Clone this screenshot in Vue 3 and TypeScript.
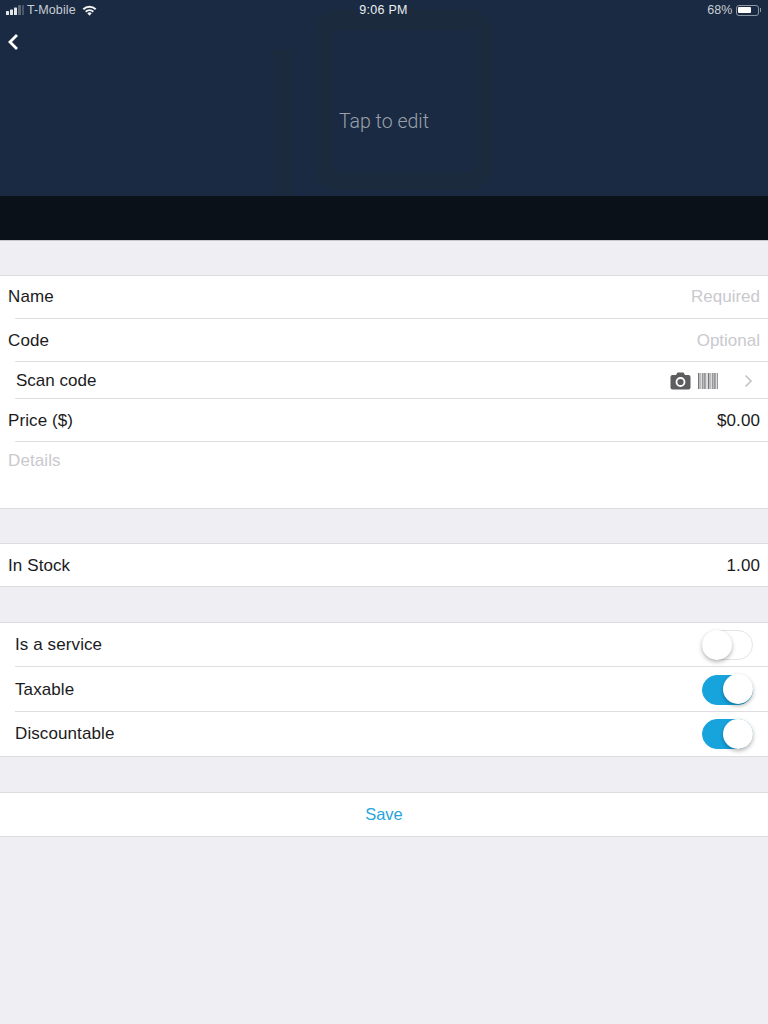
<script setup lang="ts">
const toggles = [
  { label: 'Is a service', on: false },
  { label: 'Taxable', on: true },
  { label: 'Discountable', on: true },
]
// widths of the barcode strokes, drawn left to right
const bars = [1, 0.5, 0.5, 1, 0.5, 1, 0.5, 0.5, 1, 0.5, 0.5, 1, 0.5, 1, 0.5, 1]
const barX = bars.map((_, i) => i * 1.25)
</script>

<template>
  <div class="page">
    <header class="hero">
      <div class="art">
        <div class="art-bar"></div>
        <div class="art-frame"></div>
      </div>
      <div class="status">
        <div class="status-left">
          <svg width="18" height="10" viewBox="0 0 18 10" class="signal">
            <rect x="0" y="6" width="3" height="4" rx="0.6" fill="#e4e7ea" />
            <rect x="4" y="4.5" width="3" height="5.5" rx="0.6" fill="#e4e7ea" />
            <rect x="8" y="2.5" width="3" height="7.5" rx="0.6" fill="#e4e7ea" />
            <rect x="12" y="0" width="3" height="10" rx="0.6" fill="#5b6676" />
            <rect x="16" y="0" width="2" height="10" rx="0.6" fill="#4a5668" />
          </svg>
          <span>T-Mobile</span>
          <svg width="15" height="11" viewBox="0 0 15 11" class="wifi">
            <path d="M0.6 3.6 A10 10 0 0 1 14.4 3.6 L13 5 A8 8 0 0 0 2 5 Z" fill="#f2f3f5" />
            <path d="M3 6 A6.6 6.6 0 0 1 12 6 L10.6 7.4 A4.6 4.6 0 0 0 4.4 7.4 Z" fill="#f2f3f5" />
            <path d="M5.3 8.3 A3.2 3.2 0 0 1 9.7 8.3 L7.5 10.7 Z" fill="#f2f3f5" />
          </svg>
        </div>
        <div class="status-time">9:06 PM</div>
        <div class="status-right">
          <span>68%</span>
          <div class="battery"><div class="battery-fill"></div></div>
          <div class="battery-tip"></div>
        </div>
      </div>
      <button class="back" aria-label="Back">
        <svg width="12" height="18" viewBox="0 0 12 18">
          <path d="M10 2 L3 9 L10 16" fill="none" stroke="#fff" stroke-width="2.8" />
        </svg>
      </button>
      <div class="tap">Tap to edit</div>
    </header>
    <div class="hero-foot"></div>

    <section class="group first">
      <div class="row tall name">
        <span>Name</span>
        <span class="hint">Required</span>
      </div>
      <div class="row tall">
        <span>Code</span>
        <span class="hint">Optional</span>
      </div>
      <div class="row scan">
        <span>Scan code</span>
        <div class="scan-icons">
          <svg width="21" height="18" viewBox="0 0 21 18">
            <path d="M2.5 3 H6 L7.5 0.5 H13.5 L15 3 H18.5 Q20.5 3 20.5 5 V15.5 Q20.5 17.5 18.5 17.5 H2.5 Q0.5 17.5 0.5 15.5 V5 Q0.5 3 2.5 3 Z" fill="#5d5d5f" />
            <circle cx="10.5" cy="10" r="4" fill="none" stroke="#fff" stroke-width="1.8" />
          </svg>
          <svg width="20" height="16" viewBox="0 0 20 16" class="barcode">
            <rect v-for="(w, i) in bars" :key="i" :x="barX[i]" y="0" :width="w" height="16" fill="#77777a" />
          </svg>
          <svg width="9" height="14" viewBox="0 0 9 14" class="chevron">
            <path d="M1.5 1.5 L7 7 L1.5 12.5" fill="none" stroke="#c4c4c8" stroke-width="1.7" />
          </svg>
        </div>
      </div>
      <div class="row tall">
        <span>Price ($)</span>
        <span>$0.00</span>
      </div>
      <div class="details">Details</div>
    </section>

    <section class="group stock">
      <div class="row tall">
        <span>In Stock</span>
        <span>1.00</span>
      </div>
    </section>

    <section class="group">
      <div v-for="t in toggles" :key="t.label" class="row toggle-row">
        <span>{{ t.label }}</span>
        <div class="toggle" :class="{ on: t.on }"><div class="knob"></div></div>
      </div>
    </section>

    <section class="group">
      <button class="save">Save</button>
    </section>
  </div>
</template>

<style scoped>
.page {
  min-height: 1024px;
  background: #eeeef3;
  font-family: "Liberation Sans", Arial, sans-serif;
  font-size: 17px;
  letter-spacing: 0.1px;
  color: #1b1b1d;
  overflow: hidden;
}

.hero {
  position: relative;
  height: 196px;
  background: #1a2a42;
  overflow: hidden;
}

.art {
  position: absolute;
  inset: 0;
}

.art-bar {
  position: absolute;
  left: 274px;
  top: 50px;
  width: 19px;
  height: 146px;
  background: #1b2a3d;
}

.art-frame {
  position: absolute;
  left: 314px;
  top: 10px;
  width: 179px;
  height: 180px;
  box-sizing: border-box;
  border: solid #1b2a3d;
  border-width: 20px 19px 19px;
  border-radius: 22px;
}

.status {
  position: relative;
  display: grid;
  grid-template-columns: 1fr auto 1fr;
  align-items: center;
  height: 20px;
  padding: 0 7px 0 6px;
  font-size: 12.5px;
  color: #c9ced5;
}

.status-left {
  display: flex;
  align-items: center;
}

.signal {
  margin-right: 3px;
}

.wifi {
  margin-left: 6px;
}

.status-time {
  color: #eceef1;
  letter-spacing: 0.3px;
}

.status-right {
  display: flex;
  align-items: center;
  justify-content: flex-end;
}

.battery {
  width: 23px;
  height: 11px;
  margin-left: 3px;
  padding: 1.5px;
  box-sizing: border-box;
  border: 1px solid #8d96a3;
  border-radius: 3px;
}

.battery-fill {
  width: 70%;
  height: 100%;
  background: #fff;
  border-radius: 1px;
}

.battery-tip {
  width: 1.5px;
  height: 4px;
  margin-left: 1px;
  background: #8d96a3;
}

.back {
  position: absolute;
  left: 7px;
  top: 33px;
  padding: 0;
  border: 0;
  background: none;
  line-height: 0;
}

.tap {
  position: absolute;
  left: 0;
  right: 0;
  top: 110px;
  text-align: center;
  font-family: Roboto, "Liberation Sans", sans-serif;
  font-weight: 300;
  font-size: 19.5px;
  letter-spacing: 0;
  line-height: 24px;
  color: #9aa1ac;
}

.hero-foot {
  height: 45px;
  background: #0a1118;
  border-bottom: 1px solid #c8c8cc;
  box-sizing: border-box;
}

.group {
  margin-top: 35px;
  background: #fff;
  border-top: 1px solid #dcdce0;
  border-bottom: 1px solid #dcdce0;
}

.group.first,
.group.stock {
  margin-top: 34px;
}

.row {
  display: flex;
  align-items: center;
  justify-content: space-between;
  padding: 0 8px;
  box-sizing: border-box;
  position: relative;
}

.row.tall {
  height: 43px;
}

.row.name {
  padding-bottom: 2px;
}

.group.stock .row.tall {
  height: 42px;
  padding-top: 1px;
}

.row::after {
  content: "";
  position: absolute;
  left: 15px;
  right: 0;
  bottom: 0;
  height: 1px;
  background: #dedee2;
}

.group > .row:last-child::after {
  display: none;
}

.hint {
  color: #c9c9ce;
  letter-spacing: 0;
}

.row.scan {
  height: 37px;
  padding-left: 16px;
  padding-right: 15px;
  letter-spacing: 0;
}

.scan-icons {
  display: flex;
  align-items: center;
}

.barcode {
  margin-left: 7px;
}

.chevron {
  margin-left: 26px;
}

.details {
  height: 66px;
  padding: 9px 8px 0;
  box-sizing: border-box;
  color: #c9c9ce;
  line-height: 20px;
}

.row.toggle-row {
  height: 44px;
  padding-left: 15px;
  padding-right: 15px;
}

.row.toggle-row:nth-child(2) {
  height: 45px;
}

.toggle {
  position: relative;
  width: 51px;
  height: 30px;
  box-sizing: border-box;
  border: 1.5px solid #e4e4e6;
  border-radius: 15px;
  background: #fff;
}

.toggle.on {
  background: #17a4dd;
  border-color: #17a4dd;
}

.knob {
  position: absolute;
  left: -1.5px;
  top: -1.5px;
  width: 30px;
  height: 30px;
  border-radius: 50%;
  background: #fff;
  box-shadow: 0 2px 4px rgba(0, 0, 0, 0.3);
}

.toggle.on .knob {
  left: 19.5px;
}

.save {
  display: block;
  width: 100%;
  height: 43px;
  padding: 0;
  border: 0;
  background: none;
  font: inherit;
  font-size: 16.5px;
  letter-spacing: 0;
  color: #27a5dc;
}
</style>
